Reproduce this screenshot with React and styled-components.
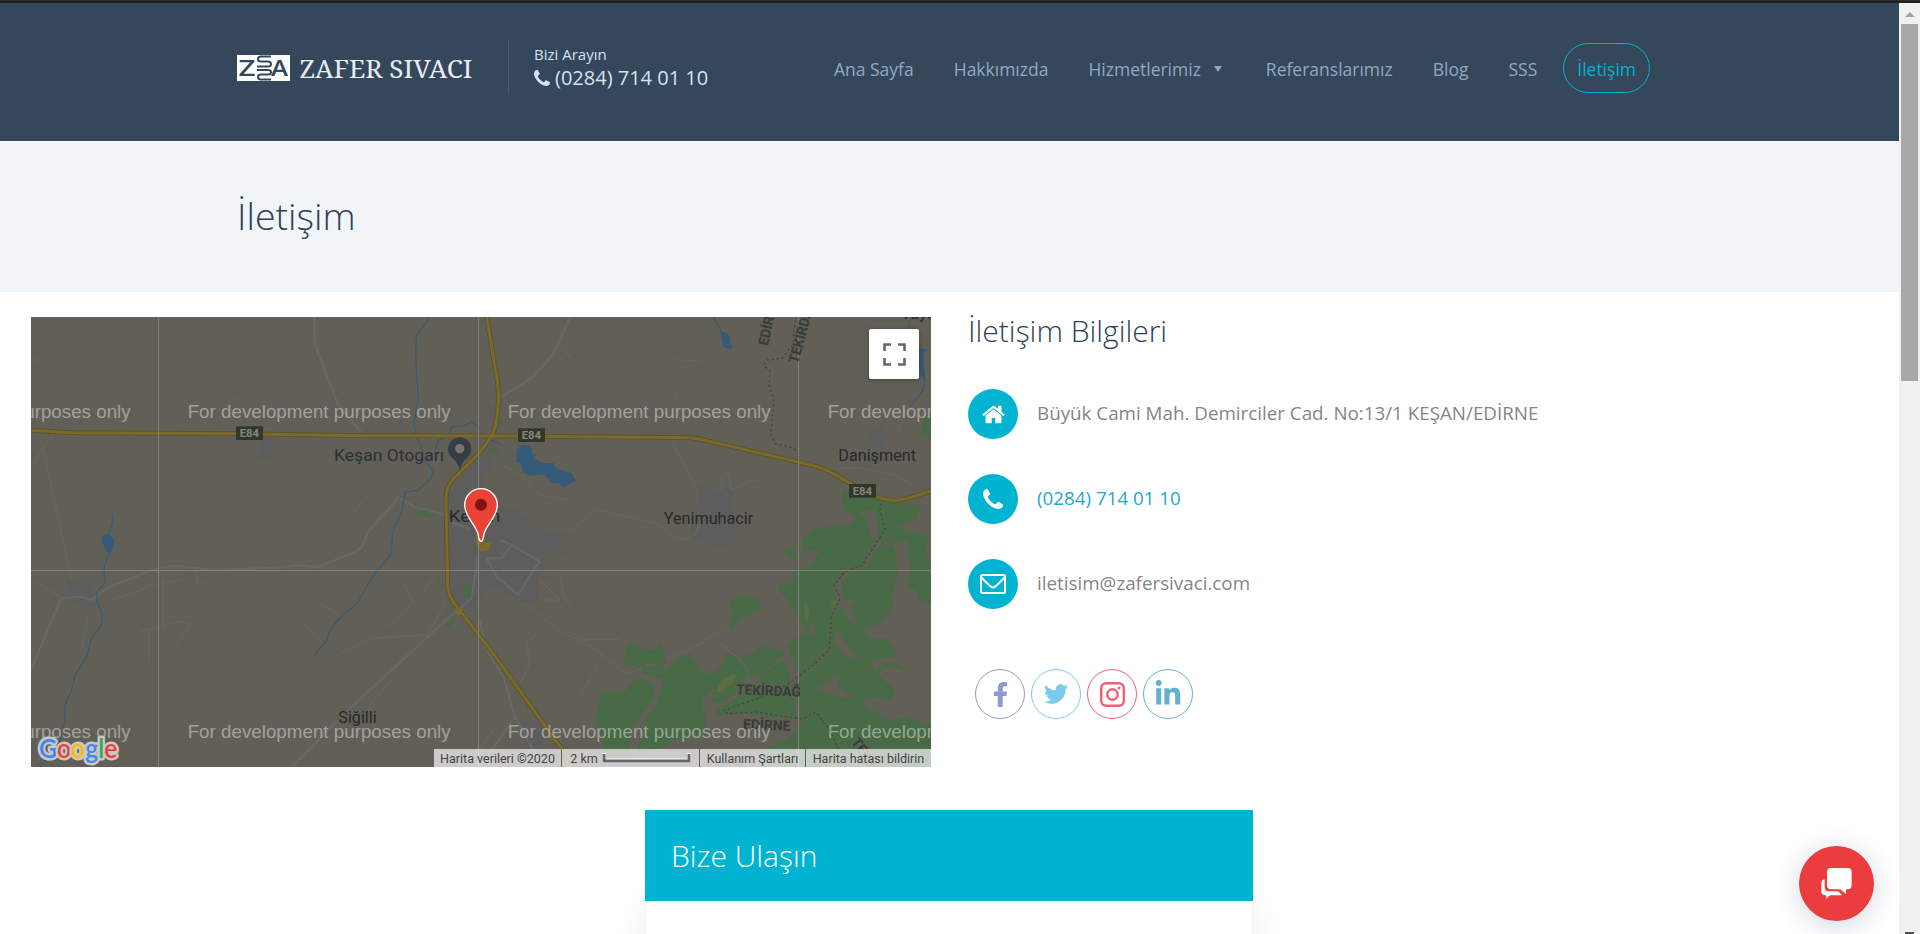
import React from "react";
import styled, { createGlobalStyle } from "styled-components";
import { FaFacebookF, FaTwitter, FaLinkedinIn } from "react-icons/fa";

const GlobalStyle = createGlobalStyle`
  *, *::before, *::after { box-sizing: border-box; }
  html, body { margin: 0; padding: 0; overflow: hidden; background: #fff; }
  body { font-family: "Open Sans", "Noto Sans", sans-serif; color: #858585; }
  a { color: inherit; text-decoration: none; }
  h1, h2, p { margin: 0; font-weight: 300; }
`;

const Window = styled.div`
  height: 934px;
  display: flex;
  flex-direction: column;
  overflow: hidden;
`;
const TopEdge = styled.div`
  flex: none;
  height: 3px;
  background: #212121;
  border-top: 1px solid #2d2d2b;
`;
const Viewport = styled.div`
  flex: 1;
  display: flex;
  min-height: 0;
`;
const Page = styled.div`
  flex: 1;
  min-width: 0;
  overflow: hidden;
`;

const Scrollbar = styled.div`
  width: 21px;
  background: #f1f1f1;
  display: flex;
  flex-direction: column;
  align-items: center;
  overflow: hidden;
`;
const ScrollArrow = styled.div`
  width: 0;
  height: 0;
  border: 5px solid transparent;
  border-top-width: 0;
  border-bottom-color: #a3a3a3;
  margin: 9px 0 7px;
`;
const ScrollThumb = styled.div`
  width: 17px;
  height: 357px;
  background: #a8a8a8;
`;
const ScrollDown = styled.div`
  margin-top: auto;
  width: 9px;
  height: 2px;
  background: #505050;
`;

const Header = styled.header`
  height: 138px;
  background: #35475b;
  padding: 38px 249px 0 237px;
  display: flex;
  align-items: flex-start;
`;
const Logo = styled.svg`
  display: block;
  width: 236px;
  height: 26px;
  margin-top: 14px;
  overflow: visible;
`;
const CallBox = styled.div`
  margin-left: 35px;
  padding-left: 25px;
  height: 53px;
  border-left: 1px solid #4a5969;
  color: #d3e3f4;
`;
const CallLabel = styled.div`
  font-size: 15px;
  line-height: 20px;
  padding-top: 3px;
  margin-bottom: 1px;
`;
const CallNumber = styled.a`
  display: flex;
  align-items: center;
  gap: 5px;
  font-size: 20px;
  line-height: 26px;
`;
const Nav = styled.nav`
  margin-left: auto;
  height: 54px;
  display: flex;
  align-items: center;
`;
const NavLink = styled.a`
  display: flex;
  align-items: center;
  font-size: 17.5px;
  line-height: 24px;
  color: #8fa9c4;
  margin-right: ${(p) => p.$gap || 40}px;
  padding-top: 2px;
`;
const Caret = styled.span`
  margin: 0 4px 0 13px;
  border: 4px solid transparent;
  border-top: 6px solid #8fa9c4;
  border-bottom: 0;
`;
const NavPill = styled.a`
  height: 50px;
  padding: 1px 13px 0;
  border: 1px solid #00b3d1;
  border-radius: 25px;
  color: #00b3d1;
  font-size: 17.5px;
  line-height: 49px;
`;

const Hero = styled.section`
  height: 151px;
  background: #f1f5f8;
  padding: 48px 0 0 237px;
`;
const HeroTitle = styled.h1`
  font-size: 37.5px;
  line-height: 54px;
  color: #2e4158;
`;

const Contact = styled.section`
  display: flex;
  padding: 25px 31px 0;
  gap: 37px;
`;
const MapBox = styled.div`
  position: relative;
  width: 900px;
  height: 450px;
  overflow: hidden;
  background: #625f57;
`;
const MapSvg = styled.svg`
  display: block;
`;
const FullscreenButton = styled.button`
  position: absolute;
  top: 12px;
  right: 12px;
  width: 50px;
  height: 50px;
  border: 0;
  padding: 0;
  border-radius: 2px;
  background: #fff;
  box-shadow: 0 1px 5px rgba(0, 0, 0, 0.3);
  display: flex;
  align-items: center;
  justify-content: center;
`;
const MapFooter = styled.div`
  position: absolute;
  right: 0;
  bottom: 0;
  height: 18px;
  display: flex;
  gap: 1px;
  font-family: Roboto, sans-serif;
  font-size: 12.5px;
  line-height: 19px;
  color: #444;
`;
const FooterCell = styled.span`
  width: ${(p) => p.$w}px;
  display: flex;
  align-items: center;
  justify-content: center;
  gap: 4px;
  white-space: nowrap;
  background: rgba(245, 245, 245, 0.72);
`;

const Info = styled.div`
  width: 640px;
`;
const InfoTitle = styled.h2`
  font-size: 30px;
  line-height: 40px;
  margin-top: -6px;
  margin-bottom: 38px;
  color: #2e4158;
`;
const InfoRow = styled.div`
  display: flex;
  align-items: center;
  gap: 19px;
  height: 50px;
  margin-bottom: 35px;
  font-size: 18.8px;
  color: ${(p) => (p.$link ? "#1fa6c9" : "#858585")};
`;
const InfoText = styled.span`
  padding-bottom: 2px;
`;
const RoundIcon = styled.span`
  width: 50px;
  height: 50px;
  border-radius: 50%;
  background: #00b3d1;
  color: #fff;
  display: flex;
  align-items: center;
  justify-content: center;
`;
const Socials = styled.div`
  display: flex;
  gap: 6px;
  padding: 25px 0 0 7px;
`;
const Social = styled.a`
  width: 50px;
  height: 50px;
  border-radius: 50%;
  border: 1.5px solid ${(p) => p.$color};
  color: ${(p) => p.$color};
  display: flex;
  align-items: center;
  justify-content: center;
`;

const FormCard = styled.section`
  width: 608px;
  height: 500px;
  margin: 43px 0 0 645px;
  border: 1px solid #f2f2f2;
  border-top: 0;
  box-shadow: 0 95px 35px 0 rgba(0, 0, 0, 0.08);
  background: #fff;
`;
const FormHeader = styled.div`
  margin: 0 -1px;
  height: 91px;
  padding: 25px 26px 0;
  background: #00b3d1;
`;
const FormTitle = styled.h2`
  font-size: 30px;
  line-height: 42px;
  color: #fff;
`;

const ChatButton = styled.button`
  position: fixed;
  left: 1799px;
  top: 846px;
  width: 75px;
  height: 75px;
  padding: 0;
  border: 0;
  border-radius: 50%;
  background: #eb3d3d;
  box-shadow: 0 4px 26px rgba(60, 80, 120, 0.24);
`;

const PHONE =
  "M1408 1240q0 27-10 70.5t-21 68.5q-21 50-122 106-94 51-186 51-27 0-53-3.5t-57.5-12.5-47-14.5-55.5-20.5-49-18q-98-35-175-83-127-79-264-216t-216-264q-48-77-83-175-3-9-18-49t-20.5-55.5-14.5-47-12.5-57.5-3.5-53q0-92 51-186 56-101 106-122 25-11 68.5-21t70.5-10q14 0 21 3 18 6 53 76 11 19 30 54t35 63.5 31 53.5q3 4 17.5 25t21.5 35.5 7 28.5q0 20-28.5 50t-62 55-62 53-28.5 46q0 9 5 22.5t8.5 20.5 14 24 11.5 19q76 137 174 235t235 174q2 1 19 11.5t24 14 20.5 8.5 22.5 5q18 0 46-28.5t53-62 55-62 50-28.5q14 0 28.5 7t35.5 21.5 25 17.5q25 15 53.5 31t63.5 35 54 30q70 35 76 53 3 7 3 21z";
const HOME =
  "M1472 992v480q0 26-19 45t-45 19h-384v-384h-256v384h-384q-26 0-45-19t-19-45v-480q0-1 .5-3t.5-3l575-474 575 474q1 2 1 6zm223-69l-62 74q-8 9-21 11h-3q-13 0-21-7l-692-577-692 577q-12 8-24 7-13-2-21-11l-62-74q-8-10-7-23.5t11-21.5l719-599q32-26 76-26t76 26l244 204v-195q0-14 9-23t23-9h192q14 0 23 9t9 23v408l219 182q10 8 11 21.5t-7 23.5z";

const Glyph = ({ d, box, w, h }) => (
  <svg width={w} height={h} viewBox={box} fill="currentColor">
    <path d={d} />
  </svg>
);

const Envelope = () => (
  <svg width="26" height="20" viewBox="0 0 26 20" fill="none" stroke="currentColor" strokeWidth="2" strokeLinejoin="round">
    <rect x="1" y="1" width="24" height="18" rx="1.500" />
    <path d="M1.500 3.500q5 5.500 9.200 9 2.300 2 4.600 0 4.200-3.500 9.200-9" />
  </svg>
);

const BrandLogo = () => (
  <Logo viewBox="0 0 236 26">
    <rect width="53" height="26" fill="#fff" />
    <g fill="#35475b" fontFamily="Open Sans, sans-serif" fontWeight="600" fontSize="22">
      <text x="1.5" y="21" textLength="17" lengthAdjust="spacingAndGlyphs">Z</text>
      <text x="34" y="21" textLength="17" lengthAdjust="spacingAndGlyphs">A</text>
    </g>
    <g fill="none" stroke="#35475b" strokeWidth="2">
      <path d="M34 1.500H24q-3 0-3 2.500t3 2.500h7q3 0 3 2.500t-3 2.500H20" />
      <path d="M20 15h11q3 0 3 2.200t-3 2.200h-7q-3 0-3 2.500t3 2.500h10" />
    </g>
    <text
      x="62.500" y="22.500" fill="#e9edf1" fontSize="26"
      fontFamily="Noto Serif, Droid Serif, DejaVu Serif Condensed, DejaVu Serif, serif"
      textLength="173" lengthAdjust="spacingAndGlyphs"
    >
      ZAFER SIVACI
    </text>
  </Logo>
);

const Watermarks = () => (
  <g fill="#fff" fillOpacity=".42" fontFamily="Liberation Sans, Arial, sans-serif" fontSize="57">
    {[323, 1283].map((y) =>
      [-457, 503, 1463, 2423].map((x) => (
        <text key={`${x}-${y}`} x={x} y={y} textLength="789" lengthAdjust="spacingAndGlyphs">
          For development purposes only
        </text>
      ))
    )}
  </g>
);

const Shield = ({ x, y }) => (
  <g>
    <rect x={x} y={y} width="81" height="41" fill="#2f3829" />
    <text x={x + 11} y={y + 32} fill="#85867c" fontFamily="Roboto, sans-serif" fontWeight="700" fontSize="32" textLength="58" lengthAdjust="spacingAndGlyphs">E84</text>
  </g>
);

/* Woods in the south-east of the map, with their own origin */
const Woodland = () => (
  <g transform="translate(1320 690)">
    <g fill="#496a47" stroke="#496a47" strokeWidth="6" strokeLinejoin="round">
      <path d="M812 190L840 165 870 177 895 180 896 213 865 222 830 243 815 265 807 250 820 215z" />
      <path d="M497 345L508 312 540 325 585 335 600 317 612 350 610 373 560 365 540 378 510 370 497 376z" />
      <path d="M550 382L612 380 614 413 580 408 547 396z" />
      <path d="M625 387L650 362 670 350 697 355 700 367 717 375 720 392 752 408 752 450 722 478 720 500 736 522 733 570 705 588 640 600 610 620 565 628 530 640 548 600 555 545 588 502 602 460 612 420z" />
      <path d="M425 457L500 455 520 427 550 421 580 437 578 470 560 500 538 530 515 560 505 640 440 640 430 590 407 532 420 500z" />
      <path d="M757 402L790 378 802 340 830 358 862 400 852 428 812 468 790 484 755 482 768 450 755 425z" />
      <path d="M847 350L880 342 905 320 965 334 968 345 920 383 895 405 872 412 866 385z" />
      <path d="M870 450L910 408 960 367 978 372 985 410 1008 520 1012 533 900 528 850 515 775 524 773 512 800 495z" />
      <path d="M968 30L990 25 1013 52 1000 62z" />
      <path d="M1028 2L1250 -4 1222 32 1210 76 1158 92 1117 138 1128 200 1112 215 1108 318 1060 372 1020 400 1000 350 985 315 1010 295 1042 278 1005 215 985 175 957 150 965 130 1003 143 1000 98 1055 82 1085 30z" />
      <path d="M1243 32L1270 15 1300 20 1310 100 1292 160 1298 190 1270 240 1215 268 1190 240 1172 202 1198 180 1150 175 1147 130 1178 98 1225 78z" />
      <path d="M1147 205L1158 235 1200 268 1232 298 1280 297 1308 345 1268 350 1228 370 1250 402 1272 425 1297 450 1297 478 1240 470 1205 488 1225 510 1290 543 1340 533 1413 560 1413 690 905 690 925 625 990 595 1032 545 1025 520 998 435 1030 405 1072 380 1113 335 1122 225z" />
      <path d="M1345 2L1350 -20 1370 -22 1400 -5 1395 45 1413 75 1413 188 1385 180 1372 150 1342 135 1355 80 1348 40z" />
      <path d="M1150 -148L1170 -148 1250 -125 1300 -112 1378 -103 1368 -68 1330 -50 1300 -35 1340 -28 1340 -5 1310 10 1260 0 1255 -60 1238 -90 1190 -92 1222 -50 1228 0 1180 12 1030 30 1030 0 1060 -30 1120 -38 1180 -48 1192 -65 1150 -95z" />
    </g>
    <path d="M1247 405q18-35 50-28 24 0 34 10" fill="none" stroke="#496a47" strokeWidth="13" strokeLinecap="round" />
    <g fill="#625f57">
      <path d="M1125 265L1190 352 1190 360 1150 345 1120 300z" />
      <path d="M1070 445L1145 400 1130 440 1180 470 1150 475 1100 460z" />
      <path d="M1050 245L1062 262 1068 285 1048 278z" />
    </g>
    <g fill="#5b6d42">
      <path d="M785 420L820 403 832 408 812 436 785 458 768 455z" />
      <path d="M1037 180L1048 215 1042 248 1032 222z" />
      <path d="M1115 183L1130 178 1137 195 1125 210 1112 202z" />
    </g>
  </g>
);

/* Map drawing: 2700 x 1350 units, origin offset (33, 21), three units to a pixel */
const MapDrawing = () => (
  <MapSvg width="900" height="450" viewBox="33 21 2700 1350">
    {/* built-up areas */}
    <g fill="#5d5d5d">
      <path d="M1400 265L1425 300 1450 340 1425 385 1412 420 1412 480 1390 490 1386 540 1430 590 1485 600 1540 630 1560 655 1640 672 1648 715 1640 732 1572 722 1575 780 1552 800 1550 880 1510 880 1450 842 1400 832 1372 880 1350 905 1310 890 1290 850 1285 560 1330 500 1400 430 1420 375 1408 320z" />
      <path d="M2035 522L2065 535 2085 550 2115 530 2140 535 2140 590 2154 645 2144 690 2104 710 2050 700 2015 685 2012 640 2035 580z" />
      <path d="M2545 370L2580 348 2602 380 2595 415 2565 440 2545 475 2525 485 2533 455 2563 425z" />
      <path d="M150 808L220 832 225 890 205 898 125 865z" />
      <path d="M722 360L750 380 755 440 717 450z" />
      <path d="M1500 1235L1575 1232 1570 1300 1540 1340 1500 1280z" />
      <path d="M950 1282h85l-20 18h-40z" />
      <path d="M2050 690h100l-30 15z" />
    </g>
    {/* minor roads */}
    <g fill="none" stroke="#67655f" strokeWidth="4">
      <path d="M33 160l35-22M100 375l-30 35-35 60M70 412l65 310 20 90M45 815l75 45M360 965l110-30 45 5-50 70M385 960l3 95M530 780v38h28M270 870l75-22 55-25 85-12" />
      <path d="M430 790v170M205 925l-20 90M1000 610l35-45M900 880l50 30M845 935l65 70M1150 820l30 55-50 50-30 30M1250 790l-50 70M960 1030l90-45 170-10 60-100M1115 1110l-60 70-20 40" />
      <path d="M1620 110l35 35M1955 145l30 10 30-5 30 10M1960 250l15 15M1955 395l60 110 10 25M2105 540v-40l20-10 10 50 60-30 30 5M1440 460l70 40 45 55 90 15" />
      <path d="M1640 670l90-70 180 40 70 50 40-10 20-40M2380 475h150l95 20 60 35M1515 880l100 80 100 50 100 80 70-20 40-20" />
      <path d="M1560 960l-40 40 10 60-30 60M1640 960l55 30 100-3 60 30 90 28 100-45 40-30 50-25M2100 1000l60 50 30 40-30 60" />
      <path d="M1550 790h70l10 60 30 60M1560 810l60 60M1560 850l50-50M1570 870h50M1680 1160l50-90" />
      <path d="M660 260l-15 12M935 520l20-4M1090 510l10 5M1340 1370l80-110M33 1370l40-40 70-15 100 50" />
      <path d="M2700 250l-45 60-25 60" />
    </g>
    {/* secondary roads */}
    <g fill="none" stroke="#686768" strokeWidth="7" strokeLinejoin="round">
      <path d="M883 21v65q2 12 10 40l60 155 70 85" />
      <path d="M1650 21l-30 70-20 40-60 70-80 50-30 15" />
      <path d="M33 1080L123 865 183 860 213 870 270 830 360 795 Q420 765 480 769L580 780 780 773 830 765 890 772 950 748 1010 725 1025 710 1045 665 1070 635 1105 600 1135 562 1185 592 1265 612 1300 640 1350 655" />
      <path d="M1375 730L1355 865 1295 915 995 1190 885 1300 815 1371" />
      <path d="M1380 1371L1485 1220 1540 1320M1485 1220L1450 1100 1395 1010 1380 930" />
      <path d="M1400 745L1430 800 1495 855 1530 795 1560 755 1475 705 1445 745zM1475 705L1440 690" />
    </g>
    {/* rivers and lakes */}
    <g fill="none" stroke="#385a73" strokeWidth="3.500">
      <path d="M1228 21L1210 50 1190 75 1187 130 1190 200 1195 260 1182 340 1187 370 1207 420 1215 450 1238 485 1233 505 1195 540 1155 548 1145 605 1120 660 1112 735 1065 790 1045 820 1015 875 945 940 925 970 922 990 880 1037" />
      <path d="M280 610L275 650 260 680M268 730L252 770 255 820 230 845 232 880 248 910 245 945 215 985 200 1040 165 1095 155 1140 134 1190 134 1240 120 1290 60 1371" />
      <path d="M1245 425L1255 390 1285 380 1295 350 1330 348 1355 335 1383 358M1415 390l30 15" />
      <path d="M2080 21l25 45M2668 30v40M2715 200l-5 40-40 50" />
    </g>
    <g fill="#345a78">
      <path d="M245 680L262 668 280 685 282 708 272 730 262 726 248 700z" />
      <path d="M2100 64L2118 68 2130 80 2128 100 2140 108 2130 118 2110 110z" />
      <path d="M1490 420L1508 404 1530 408 1538 422 1536 432 1548 430 1543 445 1560 455 1578 460 1600 458 1608 475 1655 490 1668 512 1640 528 1625 532 1620 520 1595 518 1570 492 1530 498 1510 488 1502 462 1488 455z" />
      <path d="M2696 115L2725 118 2710 128 2716 215 2698 190z" />
    </g>
    <g fill="#496a47">
      <path d="M1185 602l30-2 28 16-5 7-48-8zM1405 430l15-22 25 24zM1330 825l25-1-3 40-22-6zM1275 940l28-12-18 32z" />
      <path d="M2710 325h23v55h-35z" />
    </g>
    <Woodland />
    {/* yellow points in the town */}
    <path d="M1368 675l10 5 20 20 15-5-5 25-25 5-15-20z" fill="#7a6b2d" />
    {/* provincial boundary */}
    <g fill="none" stroke="#474a40" strokeWidth="4" strokeDasharray="8 7">
      <path d="M2327 30L2317 105 2287 145 2242 150 2232 165 2250 185 2247 225 2262 270 2257 330 2252 370 2265 400 2310 412 2335 425 2335 462 2415 482 2535 552" />
      <path d="M2585 580L2580 600 2595 660 2555 720 2535 750 2530 765 2475 785 2443 825 2460 865 2435 920 2428 1020 2375 1070 2320 1110 2270 1145 2110 1202 2125 1211 2210 1206 2280 1218 2350 1227 2387 1206 2430 1260 2455 1320 2490 1371" />
    </g>
    {/* motorways */}
    <g fill="none" strokeLinejoin="round">
      {[["#5b522a", 14], ["#7a6b2d", 9]].map(([stroke, w]) => (
        <g key={w} stroke={stroke} strokeWidth={w}>
          <path d="M33 361l120 7 500 3 360 6 450 1 550 5q30 5 60 12l300 70q50 12 100 45l75 40q50 25 90 20 40-7 95-28" />
          <path d="M1400 21l25 150q15 70 8 130-3 40-15 73l-40 55-80 80q-22 25-20 65l5 250q0 30 20 56l120 155 175 245 70 95" />
        </g>
      ))}
      <path d="M1305 898l12-8 12 8-4 16-12 4z" fill="#7a6b2d" />
    </g>
    <Shield x={648} y={349} />
    <Shield x={1494} y={355} />
    <Shield x={2487} y={522} />

    {/* tile edges */}
    <path d="M415.500 21v1350M1375.500 21v1350M2335.500 21v1350M33 781.500h2700" stroke="#858279" strokeWidth="3" />

    {/* place names */}
    <g fontFamily="Roboto, sans-serif" fontSize="50" fill="#26292d" stroke="#625f57" strokeWidth="6" paintOrder="stroke" strokeOpacity=".7">
      <text x="942" y="453" fill="#2b3138" textLength="330" lengthAdjust="spacingAndGlyphs">Keşan Otogarı</text>
      <text x="1286" y="635" textLength="155" lengthAdjust="spacingAndGlyphs">Keşan</text>
      <text x="1931" y="642" textLength="269" lengthAdjust="spacingAndGlyphs">Yenimuhacir</text>
      <text x="2455" y="453" textLength="233" lengthAdjust="spacingAndGlyphs">Danişment</text>
      <text x="955" y="1240" textLength="115" lengthAdjust="spacingAndGlyphs">Siğilli</text>
      <text x="2642" y="28">Yayla</text>
      <g fontSize="42" fontWeight="700" fill="#3a3b36" stroke="#5c6058">
        <text x="2148" y="1153" textLength="194" transform="rotate(2 2148 1153)" lengthAdjust="spacingAndGlyphs">TEKİRDAĞ</text>
        <text x="2169" y="1257" textLength="142" transform="rotate(2 2169 1257)" lengthAdjust="spacingAndGlyphs">EDİRNE</text>
        <text transform="translate(2243 109) rotate(-77)" textLength="142" lengthAdjust="spacingAndGlyphs">EDİRNE</text>
        <text transform="translate(2334 162) rotate(-75)" textLength="194" lengthAdjust="spacingAndGlyphs">TEKİRDAĞ</text>
        <text transform="translate(2492 1296) rotate(54)" textLength="194" lengthAdjust="spacingAndGlyphs">TEKİRDAĞ</text>
      </g>
    </g>

    {/* bus station pin */}
    <path d="M1319 482q-6-26-22-38a35 35 0 1 1 44 0q-16 12-22 38z" fill="#363d45" />
    <circle cx="1319" cy="416" r="14" fill="#75746f" />

    <Watermarks />

    {/* selected place */}
    <path d="M1383 694c-6 0-7-10-8-18-6-32-41-54-41-91a49 49 0 0 1 98 0c0 37-35 59-41 91-1 8-2 18-8 18z" fill="#ea4335" stroke="#fff" strokeWidth="4" />
    <circle cx="1383" cy="584" r="18" fill="#811411" />

    <text
      x="57" y="1343" fontFamily="Lato, sans-serif" fontSize="79" fontWeight="600" textLength="235" lengthAdjust="spacingAndGlyphs"
      stroke="#c9c8c5" strokeWidth="15" strokeLinejoin="round" paintOrder="stroke"
    >
      <tspan fill="#4285f4">G</tspan><tspan fill="#ea4335">o</tspan><tspan fill="#fbbc05">o</tspan><tspan fill="#4285f4">g</tspan><tspan fill="#34a853">l</tspan><tspan fill="#ea4335">e</tspan>
    </text>
  </MapSvg>
);

const navItems = [
  { label: "Ana Sayfa" },
  { label: "Hakkımızda" },
  { label: "Hizmetlerimiz", caret: true },
  { label: "Referanslarımız" },
  { label: "Blog" },
  { label: "SSS", gap: 26 },
];

export default function App() {
  return (
    <Window>
      <GlobalStyle />
      <TopEdge />
      <Viewport>
        <Page>
          <Header>
            <BrandLogo />
            <CallBox>
              <CallLabel>Bizi Arayın</CallLabel>
              <CallNumber href="#">
                <Glyph d={PHONE} box="0 128 1408 1408" w={16} h={16} />
                (0284) 714 01 10
              </CallNumber>
            </CallBox>
            <Nav>
              {navItems.map((n) => (
                <NavLink key={n.label} href="#" $gap={n.gap}>
                  {n.label}
                  {n.caret && <Caret />}
                </NavLink>
              ))}
              <NavPill href="#">İletişim</NavPill>
            </Nav>
          </Header>
          <Hero>
            <HeroTitle>İletişim</HeroTitle>
          </Hero>
          <Contact>
            <MapBox>
              <MapDrawing />
              <FullscreenButton aria-label="Tam ekran">
                <svg width="23" height="23" viewBox="0 0 23 23" fill="none" stroke="#666" strokeWidth="2.600">
                  <path d="M1.500 8V1.500H8M15 1.500h6.500V8M21.500 15v6.500H15M8 21.500H1.500V15" />
                </svg>
              </FullscreenButton>
              <MapFooter>
                <FooterCell $w={127}>Harita verileri ©2020</FooterCell>
                <FooterCell $w={137}>
                  2 km
                  <svg width="89" height="10" viewBox="0 0 89 10" fill="none">
                    <path d="M1.500 0v8h86V0" stroke="#fff" strokeWidth="5" />
                    <path d="M2 1v7h85V1" stroke="#666" strokeWidth="3" />
                  </svg>
                </FooterCell>
                <FooterCell $w={105}>Kullanım Şartları</FooterCell>
                <FooterCell $w={125}>Harita hatası bildirin</FooterCell>
              </MapFooter>
            </MapBox>
            <Info>
              <InfoTitle>İletişim Bilgileri</InfoTitle>
              <InfoRow>
                <RoundIcon>
                  <Glyph d={HOME} box="64 253 1664 1283" w={23} h={19} />
                </RoundIcon>
                <InfoText>Büyük Cami Mah. Demirciler Cad. No:13/1 KEŞAN/EDİRNE</InfoText>
              </InfoRow>
              <InfoRow $link>
                <RoundIcon>
                  <Glyph d={PHONE} box="0 128 1408 1408" w={20} h={20} />
                </RoundIcon>
                <InfoText>(0284) 714 01 10</InfoText>
              </InfoRow>
              <InfoRow>
                <RoundIcon>
                  <Envelope />
                </RoundIcon>
                <InfoText>iletisim@zafersivaci.com</InfoText>
              </InfoRow>
              <Socials>
                <Social href="#" $color="#8b9dc8"><FaFacebookF size={25} /></Social>
                <Social href="#" $color="#7bcbea"><FaTwitter size={24} /></Social>
                <Social href="#" $color="#f16071">
                  <svg width="25" height="25" viewBox="0 0 25 25" fill="none" stroke="currentColor" strokeWidth="2.400">
                    <rect x="1.200" y="1.200" width="22.600" height="22.600" rx="5" />
                    <circle cx="12.500" cy="12.500" r="5.200" />
                    <circle cx="19" cy="6" r="1.500" fill="currentColor" stroke="none" />
                  </svg>
                </Social>
                <Social href="#" $color="#62b0d4"><FaLinkedinIn size={28} /></Social>
              </Socials>
            </Info>
          </Contact>
          <FormCard>
            <FormHeader>
              <FormTitle>Bize Ulaşın</FormTitle>
            </FormHeader>
          </FormCard>
        </Page>
        <Scrollbar>
          <ScrollArrow />
          <ScrollThumb />
          <ScrollDown />
        </Scrollbar>
      </Viewport>
      <ChatButton aria-label="Chat">
        <svg width="75" height="75" viewBox="0 0 225 225" fill="#fff">
          <path d="M96 66h50q12 0 12 12v40q0 12-12 12h-5v14l-17-14H96q-12 0-12-12V78q0-12 12-12z" />
          <path d="M77 100v22q0 14 14 14h26l12 10q-2 2-5 2H93l-11 10v-10h-3q-12 0-12-12v-24q0-10 10-12z" />
        </svg>
      </ChatButton>
    </Window>
  );
}
